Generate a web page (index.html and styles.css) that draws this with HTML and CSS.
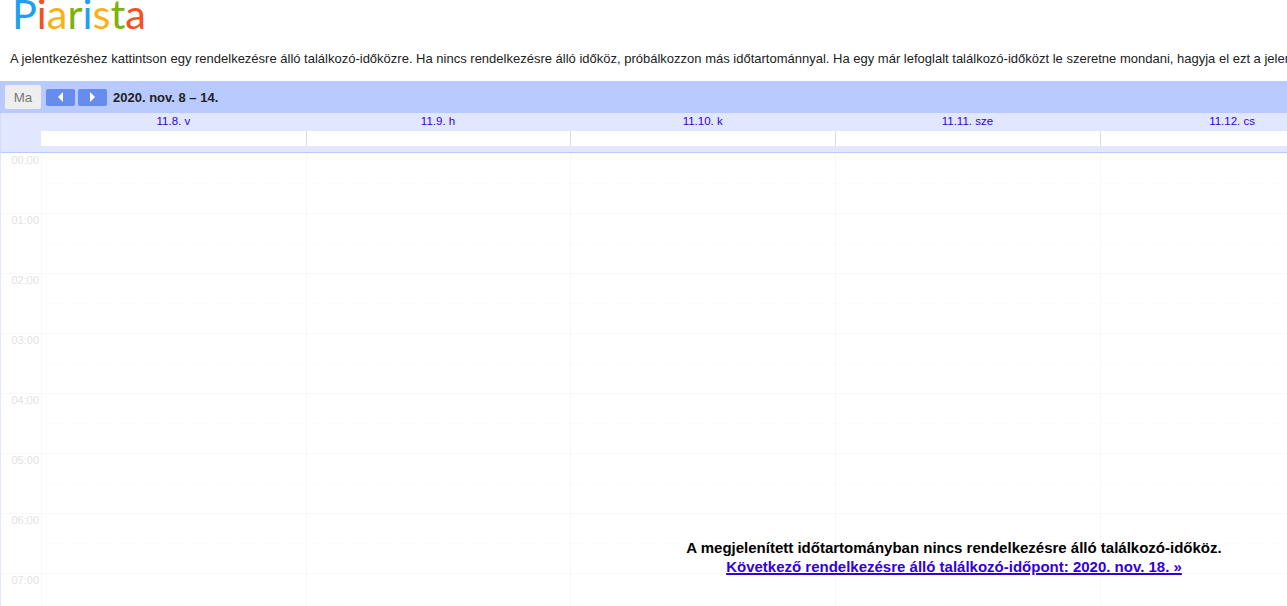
FILE: index.html
```html
<!DOCTYPE html>
<html lang="hu">
<head>
<meta charset="utf-8">
<title>Piarista</title>
<link rel="stylesheet" href="styles.css">
</head>
<body>
<div class="logo"><span class="c1">P</span><span class="c2">i</span><span class="c3">a</span><span class="c4">r</span><span class="c1">i</span><span class="c3">s</span><span class="c4">t</span><span class="c2">a</span></div>
<p class="intro">A jelentkezéshez kattintson egy rendelkezésre álló találkozó-időközre. Ha nincs rendelkezésre álló időköz, próbálkozzon más időtartománnyal. Ha egy már lefoglalt találkozó-időközt le szeretne mondani, hagyja el ezt a jelentkezési oldalt.</p>
<div class="calendar">
  <div class="toolbar">
    <button class="today">Ma</button>
    <button class="nav"><svg width="7" height="10" viewBox="0 0 7 10"><path d="M6 0v10L1 5z" fill="#fff"/></svg></button>
    <button class="nav"><svg width="7" height="10" viewBox="0 0 7 10"><path d="M1 0v10l5-5z" fill="#fff"/></svg></button>
    <span class="range">2020. nov. 8 – 14.</span>
  </div>
  <div class="head">
    <div class="corner"></div>
    <div class="day"><a>11.8. v</a><i></i></div>
    <div class="day"><a>11.9. h</a><i></i></div>
    <div class="day"><a>11.10. k</a><i></i></div>
    <div class="day"><a>11.11. sze</a><i></i></div>
    <div class="day"><a>11.12. cs</a><i></i></div>
    <div class="day"><a>11.13. p</a><i></i></div>
    <div class="day"><a>11.14. szo</a><i></i></div>
  </div>
  <div class="body">
    <div class="times">
      <div>00:00</div><div>01:00</div><div>02:00</div><div>03:00</div><div>04:00</div><div>05:00</div><div>06:00</div><div>07:00</div>
    </div>
    <div class="col"></div><div class="col"></div><div class="col"></div><div class="col"></div><div class="col"></div><div class="col"></div><div class="col"></div>
  </div>
  <div class="notice">
    <b>A megjelenített időtartományban nincs rendelkezésre álló találkozó-időköz.</b>
    <a href="#">Következő rendelkezésre álló találkozó-időpont: 2020. nov. 18. »</a>
  </div>
</div>
</body>
</html>
```
FILE: styles.css
```css
html, body { margin: 0; height: 606px; overflow: hidden; background: #fff; }
body { font-family: "Liberation Sans", Arial, sans-serif; color: #222; }
.logo { font-family: Lato, sans-serif; font-size: 41.5px; line-height: 27px; height: 32px; padding-left: 12px; white-space: nowrap; }
.c1 { color: #1e9ff2; }
.c2 { color: #f4511e; }
.c3 { color: #fbb016; }
.c4 { color: #7cb305; }
.intro { margin: 19px 0 0; height: 30px; padding-left: 10px; font-size: 13px; line-height: 16px; white-space: nowrap; }
.calendar { position: relative; width: 1894px; }
.toolbar { display: flex; align-items: center; height: 32px; background: #b8caff; padding-left: 5px; }
.today { width: 36px; height: 24px; margin-right: 5px; padding: 0; border: 0; border-radius: 2px; background: #eee; color: #777; font: 13.33px "Liberation Sans", sans-serif; }
.nav { display: flex; align-items: center; justify-content: center; width: 29px; height: 17px; margin-right: 3px; padding: 0; border: 0; border-radius: 2px; background: #668cee; }
.range { margin-left: 3px; font-size: 13px; font-weight: 700; }
.head { display: flex; height: 39px; background: #e1e7ff; border-left: 1px solid #d5dcfb; border-bottom: 1px solid #b8caff; }
.corner { flex: 0 0 40px; }
.day { flex: 0 0 264.7px; display: flex; flex-direction: column; align-items: center; }
.day a { height: 18px; font-size: 11.5px; line-height: 16px; color: #3300dd; }
.day i { align-self: stretch; height: 15px; background: #fff; }
.day + .day i { border-left: 1px solid #ddd; }
.body { display: flex; height: 453px; overflow: hidden; border-left: 1px solid #e1e7ff; }
.times { flex: 0 0 40px; box-sizing: border-box; }
.times div { height: 60px; box-sizing: border-box; border-top: 1px solid #f8f8f8; padding-right: 2px; text-align: right; font-size: 11px; line-height: 13px; color: #e2e2e2; }
.times div:first-child { border-top-color: transparent; }
.col { flex: 0 0 264.7px; box-sizing: border-box; border-top: 1px solid transparent; border-left: 1px solid #f8f8f8; background-image: linear-gradient(to bottom, transparent 0 59px, #f8f8f8 59px 60px), linear-gradient(to bottom, #fff 0 29px, transparent 29px 30px, #fff 30px 60px), linear-gradient(to right, #f7f7f7 0 1px, #fff 1px 3px); background-size: 3px 60px; background-origin: padding-box; background-clip: padding-box; }
.notice { position: absolute; left: 581px; top: 458px; width: 746px; display: flex; flex-direction: column; align-items: center; font-size: 15px; line-height: 18px; color: #000; }
.notice a { margin-top: 1px; color: #3300dd; font-weight: 700; text-decoration: underline; text-decoration-thickness: 2px; }
```
